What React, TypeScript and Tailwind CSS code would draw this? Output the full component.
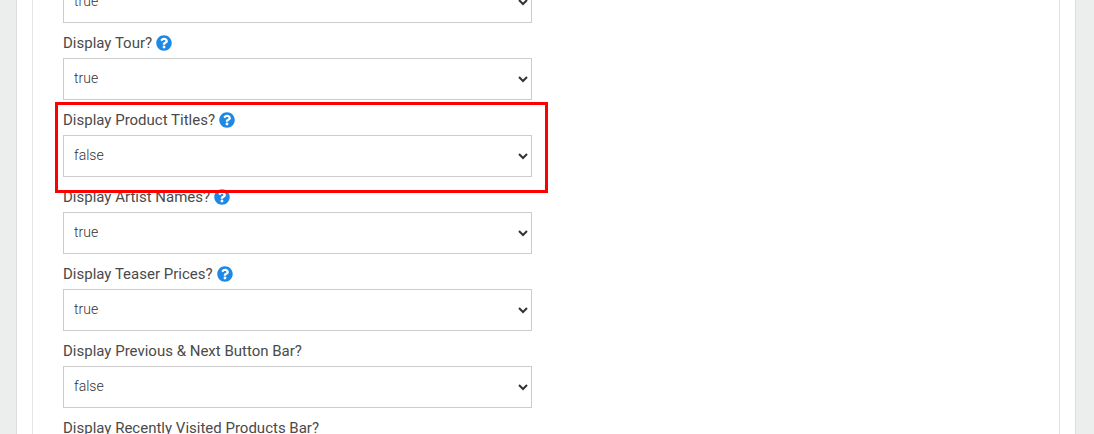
import { FaQuestionCircle } from "react-icons/fa";

const fields = [
  { label: "", value: "true", help: false },
  { label: "Display Tour?", value: "true", help: true },
  { label: "Display Product Titles?", value: "false", help: true },
  { label: "Display Artist Names?", value: "true", help: true },
  { label: "Display Teaser Prices?", value: "true", help: true },
  { label: "Display Previous & Next Button Bar?", value: "false", help: false },
  { label: "Display Recently Visited Products Bar?", value: "true", help: false },
];

function Field({ label, value, help }: { label: string; value: string; help: boolean }) {
  return (
    <div className="mb-[9px]">
      <div className="flex items-center h-[22px] mb-[4px] text-[15px] leading-[22px] text-[#4a4a4a]">
        <span>{label}</span>
        {help && <FaQuestionCircle className="ml-[4px] text-[16px] text-[#1e88e5]" />}
      </div>
      <select
        defaultValue={value}
        className="block w-[469px] h-[42px] pl-[6px] pr-[7px] pb-[2px] text-[14px] font-light text-[#333] bg-white border border-[#ccc] outline-none"
      >
        <option value="true">true</option>
        <option value="false">false</option>
      </select>
    </div>
  );
}

export default function App() {
  return (
    <div className="relative h-[434px] overflow-hidden bg-[#eceeed] pl-[16px] pr-[18px] font-['Roboto',sans-serif]">
      <div className="h-full bg-white border-x border-[#ddd] px-[15px]">
        <div className="h-full overflow-hidden border-x border-[#e4e4e4] pl-[30px]">
          <div className="-mt-[45px]">
            {fields.map((f, i) => (
              <Field key={i} {...f} />
            ))}
          </div>
        </div>
      </div>
      <div className="absolute left-[55px] top-[102px] w-[493px] h-[91px] border-[3px] border-[#ff0000]" />
    </div>
  );
}
